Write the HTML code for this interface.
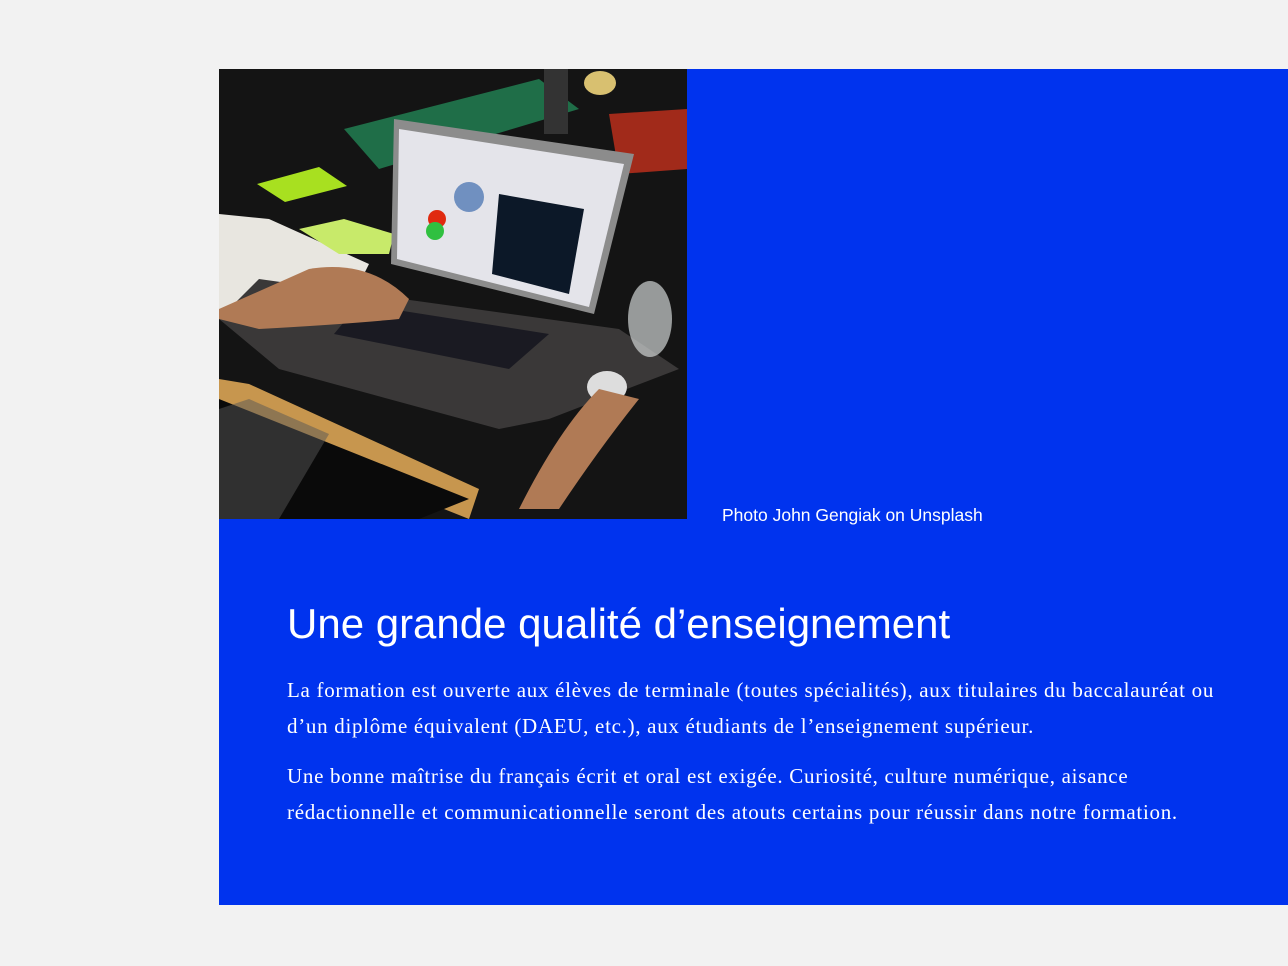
<!DOCTYPE html>
<html><head><meta charset="utf-8"><style>
html,body{margin:0;padding:0;background:#f2f2f2;width:1288px;height:966px;overflow:hidden}
.panel{position:absolute;left:219px;top:69px;width:1069px;height:836px;background:#0033ee}
.photo{position:absolute;left:219px;top:69px;width:468px;height:450px}
.cap{position:absolute;left:722px;top:505px;font:17.5px "Liberation Sans",sans-serif;color:#fff}
h1{position:absolute;left:287px;top:600px;margin:0;font:400 42px "Liberation Sans",sans-serif;color:#fff;white-space:nowrap}
.p{position:absolute;left:287px;font:21px/36px "Liberation Serif",serif;color:#fff;white-space:nowrap;letter-spacing:0.7px}
</style></head><body>
<div class="panel"></div>
<svg class="photo" viewBox="0 0 468 450" xmlns="http://www.w3.org/2000/svg">
<rect width="468" height="450" fill="#141414"/>
<polygon points="125,60 320,10 360,40 160,100" fill="#1f6e48"/>
<rect x="325" y="0" width="24" height="65" fill="#333"/>
<ellipse cx="381" cy="14" rx="16" ry="12" fill="#d8c070"/>
<polygon points="390,45 468,40 468,100 400,105" fill="#a12a1a"/>
<polygon points="38,115 100,98 128,117 66,133" fill="#a8e020"/>
<polygon points="0,145 50,150 150,195 130,235 0,240" fill="#e8e6e0"/>
<polygon points="80,160 125,150 175,165 170,185 120,185" fill="#c8ea6a"/>
<polygon points="0,250 40,210 400,260 460,300 330,350 280,360 60,300" fill="#3a3838"/>
<polygon points="140,235 330,265 290,300 115,265" fill="#1a1a22"/>
<polygon points="175,50 415,85 375,245 172,195" fill="#8c8c8c"/>
<polygon points="180,60 405,95 370,238 178,190" fill="#e4e4ea"/>
<polygon points="280,125 365,140 350,225 273,205" fill="#0c1828"/>
<circle cx="250" cy="128" r="15" fill="#7090c0"/>
<circle cx="218" cy="150" r="9" fill="#e02a10"/>
<circle cx="216" cy="162" r="9" fill="#30c040"/>
<ellipse cx="431" cy="250" rx="22" ry="38" fill="#cfd3d3" opacity=".7"/>
<ellipse cx="388" cy="318" rx="20" ry="16" fill="#ddd"/>
<path d="M90,200 Q150,190 190,230 L180,250 Q130,255 40,260 L0,250 L0,240 Z" fill="#b07a55"/>
<path d="M300,440 Q340,360 380,320 L420,330 Q380,380 340,440 Z" fill="#b07a55"/>
<polygon points="0,310 30,315 260,420 250,450 0,350" fill="#c7964e"/>
<polygon points="0,330 250,430 200,450 0,450" fill="#0a0a0a"/>
<polygon points="30,330 110,365 60,450 0,450 0,340" fill="#555" opacity=".5"/>
</svg>
<div class="cap">Photo John Gengiak on Unsplash</div>
<h1>Une grande qualité d’enseignement</h1>
<div class="p" style="top:672px">La formation est ouverte aux élèves de terminale (toutes spécialités), aux titulaires du baccalauréat ou<br>d’un diplôme équivalent (DAEU, etc.), aux étudiants de l’enseignement supérieur.</div>
<div class="p" style="top:758px">Une bonne maîtrise du français écrit et oral est exigée. Curiosité, culture numérique, aisance<br>rédactionnelle et communicationnelle seront des atouts certains pour réussir dans notre formation.</div>
</body></html>
